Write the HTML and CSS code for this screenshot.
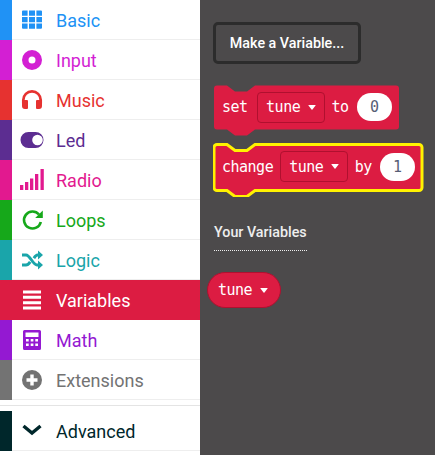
FILE: index.html
```html
<!DOCTYPE html>
<html lang="en">
<head>
  <meta charset="UTF-8">
  <title>Variables toolbox</title>
  <link rel="stylesheet" href="styles.css">
</head>
<body>
  <div class="editor">
    <nav class="toolbox">
      <div class="cat basic">
        <span class="strip"></span>
        <div class="cat-body">
          <svg class="cat-icon" viewBox="0 0 24 24"><path d="M2 3.500a1 1 0 0 1 1-1h4.600v5.200H2zM9 2.500h6v5.200H9zM16.400 2.500H21a1 1 0 0 1 1 1v4.200h-5.600zM2 9h5.600v5.200H2zM9 9h6v5.200H9zM16.400 9H22v5.200h-5.600zM2 15.500h5.600v5.300H3a1 1 0 0 1-1-1zM9 15.500h6v5.300H9zM16.400 15.500H22v4.300a1 1 0 0 1-1 1h-4.600z"/></svg>
          <span class="cat-name">Basic</span>
        </div>
      </div>
      <div class="cat input">
        <span class="strip"></span>
        <div class="cat-body">
          <svg class="cat-icon" viewBox="0 0 24 24"><path fill-rule="evenodd" d="M12 2a10 10 0 1 0 0 20 10 10 0 0 0 0-20zm0 6.500a3.500 3.500 0 1 1 0 7 3.500 3.500 0 0 1 0-7z"/></svg>
          <span class="cat-name">Input</span>
        </div>
      </div>
      <div class="cat music">
        <span class="strip"></span>
        <div class="cat-body">
          <svg class="cat-icon" viewBox="0 0 24 24"><path d="M3.300 15.500V12a8.700 8.700 0 0 1 17.400 0v3.500" fill="none" stroke="currentColor" stroke-width="2.700"/><path d="M2 13.500a1.500 1.500 0 0 1 1.500-1.500H7a1 1 0 0 1 1 1v7a1 1 0 0 1-1 1H5a3 3 0 0 1-3-3zM22 13.500a1.500 1.500 0 0 0-1.500-1.500H17a1 1 0 0 0-1 1v7a1 1 0 0 0 1 1h2a3 3 0 0 0 3-3z"/></svg>
          <span class="cat-name">Music</span>
        </div>
      </div>
      <div class="cat led">
        <span class="strip"></span>
        <div class="cat-body">
          <svg class="cat-icon" viewBox="0 0 24 24"><path fill-rule="evenodd" d="M8.500 4h7a8 8 0 0 1 0 16h-7a8 8 0 0 1 0-16zm9 2.700a5.300 5.300 0 1 0 0 10.600 5.300 5.300 0 0 0 0-10.600z"/></svg>
          <span class="cat-name">Led</span>
        </div>
      </div>
      <div class="cat radio">
        <span class="strip"></span>
        <div class="cat-body">
          <svg class="cat-icon" viewBox="0 0 24 24"><path d="M0 17h3.300v5H0zM5 14h3.300v8H5zM10 10.500h3.300V22H10zM15 6h3.300v16H15zM20.500 1h3.300v21h-3.300z"/></svg>
          <span class="cat-name">Radio</span>
        </div>
      </div>
      <div class="cat loops">
        <span class="strip"></span>
        <div class="cat-body">
          <svg class="cat-icon" viewBox="0 0 24 24"><path d="M19 6.500A8.500 8.500 0 1 0 20.800 14" fill="none" stroke="currentColor" stroke-width="2.600"/><path d="M22.800 2.500v7.600h-7.600z"/></svg>
          <span class="cat-name">Loops</span>
        </div>
      </div>
      <div class="cat logic">
        <span class="strip"></span>
        <div class="cat-body">
          <svg class="cat-icon" viewBox="0 0 24 24"><path d="M2 7h4c4 0 7 10 11 10h2M2 17h4c1.500 0 3-1.500 4.200-3.200M13.800 10.200C15 8.500 16 7 17.500 7H19" fill="none" stroke="currentColor" stroke-width="3"/><path d="M18 2.500l5 4.500-5 4.500zM18 12.500l5 4.500-5 4.500z"/></svg>
          <span class="cat-name">Logic</span>
        </div>
      </div>
      <div class="cat variables">
        <span class="strip"></span>
        <div class="cat-body">
          <svg class="cat-icon" viewBox="0 0 24 24"><path d="M3 2.500h18v3H3zM3 7.800h18v3H3zM3 13.200h18v3H3zM3 18.500h18v3H3z"/></svg>
          <span class="cat-name">Variables</span>
        </div>
      </div>
      <div class="cat math">
        <span class="strip"></span>
        <div class="cat-body">
          <svg class="cat-icon" viewBox="0 0 24 24"><path fill-rule="evenodd" d="M4.500 2h15A1.500 1.500 0 0 1 21 3.500v17a1.500 1.500 0 0 1-1.500 1.500h-15A1.500 1.500 0 0 1 3 20.500v-17A1.500 1.500 0 0 1 4.500 2zM5.500 4.500v4.500h13V4.500zM6 11v2.500h2.700V11zM10.700 11v2.500h2.700V11zM15.300 11v2.500H18V11zM6 15.500V18h2.700v-2.500zM10.700 15.500V18h2.700v-2.500zM15.300 15.500V18H18v-2.500z"/></svg>
          <span class="cat-name">Math</span>
        </div>
      </div>
      <div class="cat extensions">
        <span class="strip"></span>
        <div class="cat-body">
          <svg class="cat-icon" viewBox="0 0 24 24"><path fill-rule="evenodd" d="M12 2a10 10 0 1 0 0 20 10 10 0 0 0 0-20zm-1.700 4.500h3.400v3.800h3.800v3.400h-3.800v3.800h-3.400v-3.800H6.500v-3.400h3.800z"/></svg>
          <span class="cat-name">Extensions</span>
        </div>
      </div>
      <div class="divider"></div>
      <div class="cat advanced">
        <span class="strip"></span>
        <div class="cat-body">
          <svg class="cat-icon" viewBox="0 0 24 24"><path d="M3.500 7l8.500 7 8.500-7" fill="none" stroke="currentColor" stroke-width="3.400"/></svg>
          <span class="cat-name">Advanced</span>
        </div>
      </div>
    </nav>

    <main class="flyout">
      <button class="make-btn" type="button">Make a Variable...</button>

      <div class="block block-set">
        <svg class="block-shape" width="186" height="52" viewBox="0 0 186 52"><path d="M3 .5H13l8 6h12l8-6H182a3 3 0 0 1 3 3v38a3 3 0 0 1-3 3H41l-8 6H21l-8-6H3a3 3 0 0 1-3-3V3.500a3 3 0 0 1 3-3z"/></svg>
        <span class="kw kw-set">set</span>
        <span class="dropdown">tune<i class="caret"></i></span>
        <span class="kw">to</span>
        <span class="num">0</span>
      </div>

      <div class="block block-change">
        <svg class="block-shape" width="212" height="54" viewBox="0 0 212 54"><path d="M4 1.500H14l8 6h12l8-6H206a3 3 0 0 1 3 3v40a3 3 0 0 1-3 3H42l-8 6H22l-8-6H4a3 3 0 0 1-3-3v-40a3 3 0 0 1 3-3z"/></svg>
        <span class="kw">change</span>
        <span class="dropdown">tune<i class="caret"></i></span>
        <span class="kw">by</span>
        <span class="num">1</span>
      </div>

      <div class="section-label">Your Variables</div>

      <div class="var-pill">tune<i class="caret"></i></div>
    </main>
  </div>
</body>
</html>
```

FILE: styles.css
```css
html, body {
  margin: 0;
  padding: 0;
  height: 100%;
}
body {
  font-family: Roboto, "Noto Sans", sans-serif;
  overflow: hidden;
}
.editor {
  display: flex;
  height: 455px;
}

/* toolbox */
.toolbox {
  width: 200px;
  flex: none;
  background: white;
}
.cat {
  display: flex;
  height: 40px;
  color: var(--cat);
}
.strip {
  width: 12px;
  flex: none;
  background: var(--cat);
}
.cat-body {
  flex: 1;
  display: flex;
  align-items: center;
  border-bottom: 1px solid #eeeeee;
}
.cat-icon {
  width: 24px;
  height: 24px;
  margin-left: 8px;
  fill: currentColor;
}
.cat-name {
  margin-left: 12px;
  padding-top: 2px;
  font-size: 18px;
}
.basic { --cat: #2092f5; }
.input { --cat: #d31fd3; }
.music { --cat: #e63230; }
.led { --cat: #5c2d91; }
.radio { --cat: #e2198f; }
.loops { --cat: #16a81a; }
.logic { --cat: #1aa5aa; }
.variables { --cat: #dc1c42; background: #dc1c42; color: white; }
.variables .cat-body { border-bottom-color: #dc1c42; }
.math { --cat: #9419d2; }
.extensions { --cat: #737373; }
.advanced { --cat: #00272b; }
.divider {
  height: 1px;
  margin: 5px 0;
  background: #e4e4e4;
}

/* flyout */
.flyout {
  flex: 1;
  padding: 22px 0 0 13px;
  background: #4c4a4b;
  color: white;
}
.make-btn {
  display: block;
  width: 148px;
  height: 42px;
  padding: 0;
  background: #4c4a4b;
  border: 3px solid #2c2c2c;
  border-radius: 5px;
  color: white;
  font-family: Roboto, sans-serif;
  font-size: 14.300px;
  font-weight: 500;
}

.block {
  position: relative;
  display: flex;
  align-items: center;
  gap: 7px;
  height: 44px;
  padding-left: 8px;
  font-family: "DejaVu Sans Mono", monospace;
  font-size: 15px;
  font-weight: 500;
  letter-spacing: -0.5px;
}
.block > * {
  position: relative;
}
.block-shape {
  position: absolute;
  left: 0;
  top: 0;
  fill: #dc1c42;
}
.block-set {
  margin: 21px 0 0 1px;
}
.block-change {
  margin: 14px 0 0 0;
  height: 47px;
  padding-left: 9px;
}
.block-change .block-shape {
  stroke: #fff200;
  stroke-width: 3px;
}
.kw-set {
  margin-right: 2.500px;
}
.dropdown {
  display: flex;
  align-items: center;
  box-sizing: border-box;
  width: 67.500px;
  height: 31px;
  padding-left: 8px;
  border: 1px solid #b0102f;
  border-radius: 4px;
}
.caret {
  width: 0;
  height: 0;
  margin-left: 8px;
  border-left: 4.500px solid transparent;
  border-right: 4.500px solid transparent;
  border-top: 5px solid white;
  border-radius: 1px;
}
.num {
  width: 35px;
  height: 28px;
  margin-left: 1px;
  line-height: 28px;
  text-align: center;
  background: white;
  color: #575e75;
  border-radius: 14px;
}

.section-label {
  width: 93px;
  margin: 34px 0 0 1px;
  padding-bottom: 10px;
  border-bottom: 1px dotted #eeeeee;
  font-size: 14.300px;
  font-weight: 500;
  color: #eeeeee;
  white-space: nowrap;
}

.var-pill {
  display: flex;
  align-items: center;
  box-sizing: border-box;
  width: 74px;
  height: 36px;
  margin: 21px 0 0 -6px;
  padding-left: 10px;
  background: #dc1c42;
  border: 1px solid #b0102f;
  border-radius: 18px;
  font-family: "DejaVu Sans Mono", monospace;
  font-size: 15px;
  font-weight: 500;
  letter-spacing: -0.5px;
}
```
